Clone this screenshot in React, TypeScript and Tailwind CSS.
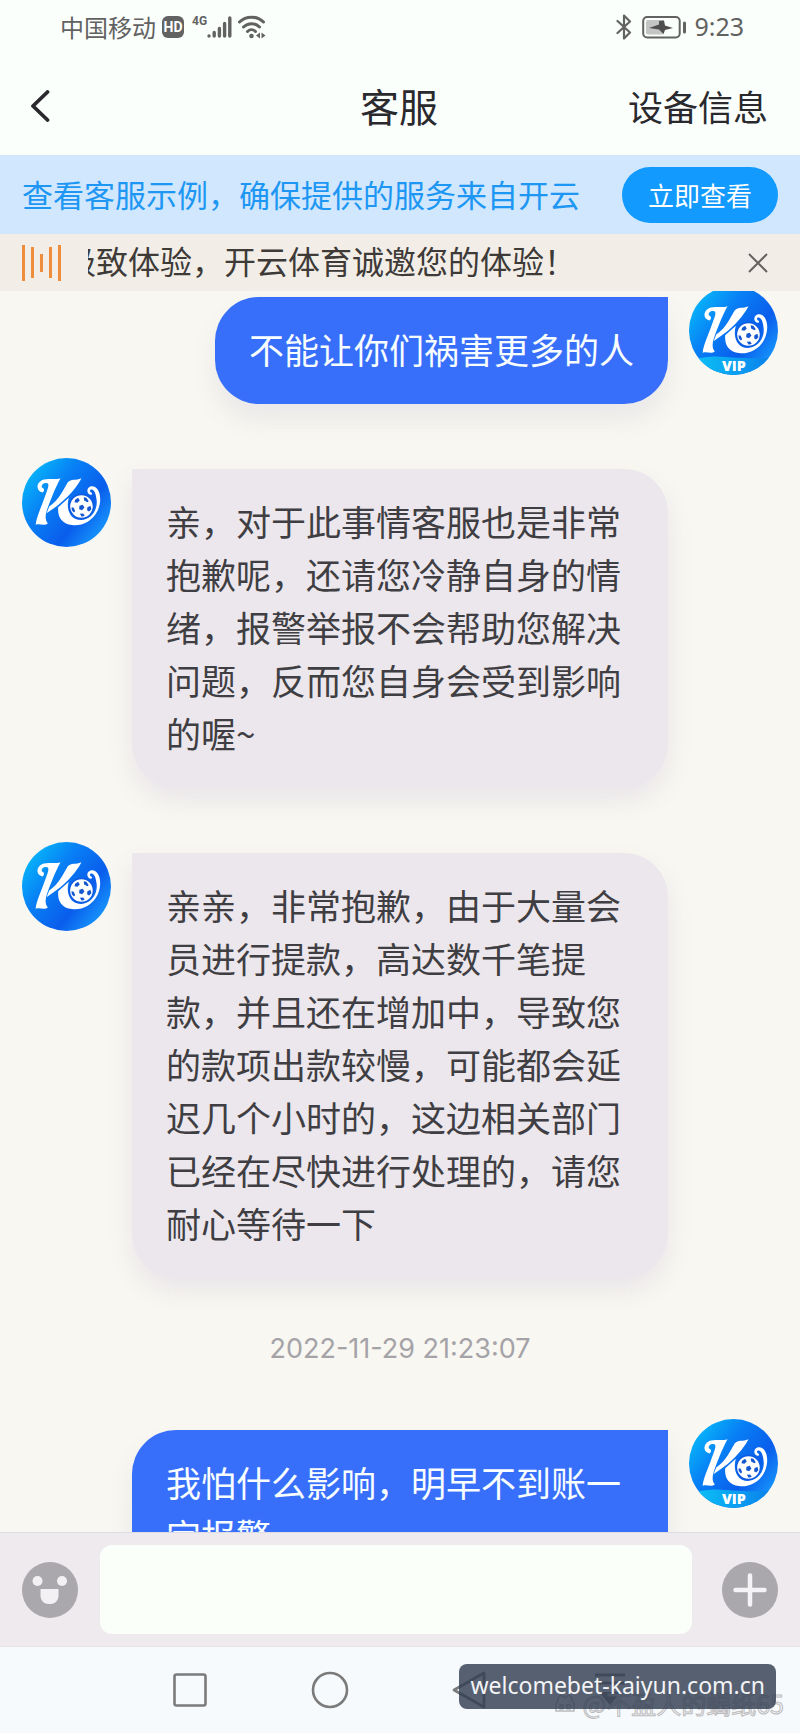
import { useId, useState } from "react";
import type { ReactNode } from "react";

type Message = {
  id: number;
  own?: boolean;
  time?: string;
  text: string;
};

const messages: Message[] = [
  { id: 1, own: true, text: "不能让你们祸害更多的人" },
  {
    id: 2,
    text: "亲，对于此事情客服也是非常抱歉呢，还请您冷静自身的情绪，报警举报不会帮助您解决问题，反而您自身会受到影响的喔~",
  },
  {
    id: 3,
    text: "亲亲，非常抱歉，由于大量会员进行提款，高达数千笔提款，并且还在增加中，导致您的款项出款较慢，可能都会延迟几个小时的，这边相关部门已经在尽快进行处理的，请您耐心等待一下",
  },
  {
    id: 4,
    own: true,
    time: "2022-11-29 21:23:07",
    text: "我怕什么影响，明早不到账一定报警",
  },
];

function Avatar({ vip }: { vip?: boolean }) {
  const id = useId();

  return (
    <svg viewBox="22 24 268 268" className="size-[89px] shrink-0" aria-hidden="true">
      <defs>
        <linearGradient id={`${id}bg`} x1="0" y1="0.1" x2="0.9" y2="0.8">
          <stop offset="0" stopColor="#06c3fb" />
          <stop offset="0.4" stopColor="#0880f5" />
          <stop offset="0.75" stopColor="#0a5dec" />
          <stop offset="1" stopColor="#1590fa" />
        </linearGradient>
        <linearGradient id={`${id}vip`} x1="0" y1="0" x2="1" y2="0">
          <stop offset="0" stopColor="#0cc6f7" />
          <stop offset="1" stopColor="#0a7bea" />
        </linearGradient>
        <clipPath id={`${id}clip`}>
          <circle cx="156" cy="158" r="134" />
        </clipPath>
      </defs>

      <g clipPath={`url(#${id}clip)`}>
        <rect x="22" y="24" width="268" height="268" fill={`url(#${id}bg)`} />
        {vip && (
          <path d="M22 250C90 228 120 238 170 240S260 246 290 230V292H22Z" fill={`url(#${id}vip)`} />
        )}
      </g>

      {/* K with the ball */}
      <g fill="#fff">
        <path d="M84 128C64 124 62 97 88 89C104 84 118 91 138 85C126 106 112 140 100 172C92 194 90 210 100 221C90 229 76 221 63 225C66 200 80 172 91 140C99 118 106 103 98 100C88 96 79 104 82 113C89 115 91 122 84 128Z" />
        <path d="M160 97C170 86 184 93 201 85C189 108 160 150 96 190L104 170C134 150 147 118 160 97Z" />
        <path d="M131 172L163 144C154 174 164 210 200 211C234 208 252 176 246 146C244 130 240 121 232 119C225 118 225 127 232 129C237 136 222 138 219 126C217 112 230 105 242 111C260 122 262 156 250 182C234 216 200 230 172 226C144 223 128 204 131 172Z" />
      </g>
      <circle cx="201" cy="170" r="38" fill="#0d5be0" />
      <circle cx="201" cy="170" r="34" fill="#fff" />
      <g fill="#1557cf">
        <path d="M182 150l9-6 5 8-7 7-9-2z" />
        <path d="M208 142l8 2 7 10-4 3-10-5z" />
        <path d="M195 168l10-3 5 8-7 8-9-3z" />
        <path d="M219 172l9-4 3 10-7 7-6-4z" />
        <path d="M171 172l7 2 4 10-4 4-6-7z" />
        <path d="M196 192l10-1 5 7-9 3z" />
      </g>

      {vip && (
        <text
          x="157"
          y="279"
          textAnchor="middle"
          fontSize="43"
          fontWeight="800"
          fill="#fff"
          className="font-['Open_Sans',sans-serif]"
        >
          VIP
        </text>
      )}
    </svg>
  );
}

function StatusBar() {
  return (
    <div className="flex h-14 items-center justify-between pr-14 pb-0.5 pl-[60px] text-2xl text-[#626262]">
      <div className="flex items-center">
        <span>中国移动</span>
        <span className="ml-1.5 flex size-[22px] items-center justify-center rounded-md bg-[#626262] font-['Roboto',sans-serif] text-sm font-bold text-white">
          HD
        </span>
        <span className="ml-2 self-start font-['Roboto',sans-serif] text-xs leading-5 font-bold">4G</span>
        <svg viewBox="0 0 25 24" className="h-6 w-[25px]" fill="none" stroke="currentColor" strokeWidth="3.4" strokeLinecap="round" aria-hidden="true">
          <path d="M2 21v.1M7.2 17.5V21M12.4 13.5V21M17.6 8.5V21M22.8 3V21" />
        </svg>
        <svg viewBox="0 0 28 24" className="ml-1.5 h-6 w-7" fill="none" stroke="currentColor" strokeWidth="3" strokeLinecap="round" aria-hidden="true">
          <path d="M1.5 7C8 .5 19 .5 25.5 7M5.500 12C10 7.5 17 7.5 21.500 12M9.500 16.500C12 14 15 14 17.500 16.500" />
          <circle cx="13.5" cy="21" r="2.3" fill="currentColor" stroke="none" />
          <path d="M22 17.5v6l-4-3zM23.500 17.500v6l4-3z" fill="currentColor" stroke="none" />
        </svg>
      </div>

      <div className="flex items-center">
        <svg viewBox="0 0 16 26" className="h-[26px] w-4" fill="none" stroke="currentColor" strokeWidth="2.2" strokeLinejoin="round" strokeLinecap="round" aria-hidden="true">
          <path d="M1.5 7l12.500 11.500-6 6V1.500l6 6L1.500 19" />
        </svg>
        <svg viewBox="0 0 44 24" className="ml-2.5 h-6 w-11" aria-hidden="true">
          <rect x="1.2" y="2" width="36.5" height="20.5" rx="4" fill="none" stroke="currentColor" strokeWidth="2" />
          <rect x="4" y="5" width="18" height="14.5" rx="2" fill="#c4c4c4" />
          <path d="M7 13L17 9.500V6L22 5.500 23 10.500 31 13 23 15 21.500 19 17 14.500Z" fill="#4f4f4f" />
          <path d="M42.500 8v9" stroke="currentColor" strokeWidth="3" strokeLinecap="round" />
        </svg>
        <span className="ml-2 font-['Noto_Sans',sans-serif] text-[25px]">9:23</span>
      </div>
    </div>
  );
}

function Bubble({ own, children }: { own?: boolean; children: ReactNode }) {
  return (
    <p
      className={`mt-[11px] px-[34px] pt-[25px] pb-[29px] text-[35px] leading-[53px] ${
        own
          ? "rounded-[44px] rounded-tr-none bg-[#376ffa] text-[#f8fdff] shadow-[0_16px_24px_rgba(120,110,170,0.1)]"
          : "rounded-[44px] rounded-tl-none bg-[#ece7ed] text-[#3f3e42] shadow-[0_12px_24px_rgba(130,110,180,0.12)]"
      }`}
    >
      {children}
    </p>
  );
}

export default function App() {
  const [draft, setDraft] = useState("");
  const [noticeOpen, setNoticeOpen] = useState(true);

  return (
    <div className="relative flex h-screen flex-col overflow-hidden bg-[#f8f7f1] font-['Noto_Sans_CJK_SC',sans-serif]">
      {/* Header */}
      <header className="bg-[#fbfffb]">
        <StatusBar />
        <div className="grid h-[99px] grid-cols-3 items-center pr-8 pl-[30px] text-[#29292e]">
          <button aria-label="返回" className="justify-self-start">
            <svg viewBox="0 0 20 32" className="h-8 w-5" fill="none" stroke="currentColor" strokeWidth="3.8" strokeLinecap="round" strokeLinejoin="round" aria-hidden="true">
              <path d="M17.500 2L3 16l14.500 14" />
            </svg>
          </button>
          <h1 className="justify-self-center text-[39px] leading-none">客服</h1>
          <button className="justify-self-end text-[35px] leading-none whitespace-nowrap">设备信息</button>
        </div>
      </header>

      {/* Verify banner */}
      <div className="flex h-[79px] shrink-0 items-center justify-between bg-[#d0e7fd] px-[22px]">
        <span className="text-[31px] whitespace-nowrap text-[#1d97f3]">查看客服示例，确保提供的服务来自开云</span>
        <button className="h-14 shrink-0 rounded-full bg-[#129aff] px-[26px] text-[26px] text-white">立即查看</button>
      </div>

      {/* Scrolling notice */}
      {noticeOpen && (
        <div className="flex h-[57px] shrink-0 items-center bg-[#f2eee7] pr-8 pl-[22px]">
          <svg viewBox="0 0 40 38" className="h-[38px] w-10 shrink-0" fill="none" stroke="#ee8d3b" strokeWidth="3" aria-hidden="true">
            <path d="M1.500 1v36M10.500 3v31M19.500 10v18M28.500 3v31M37.500 1v36" />
          </svg>
          <div className="ml-[26px] flex-1 overflow-hidden pb-1.5">
            <p className="-ml-6 text-[32px] leading-[48px] whitespace-nowrap text-[#3e3a38]">
              极致体验，开云体育诚邀您的体验！
            </p>
          </div>
          <button aria-label="关闭" className="text-[#66625f]" onClick={() => setNoticeOpen(false)}>
            <svg viewBox="0 0 20 20" className="size-5" fill="none" stroke="currentColor" strokeWidth="2" aria-hidden="true">
              <path d="M1 1l18 18M19 1L1 19" />
            </svg>
          </button>
        </div>
      )}

      {/* Messages */}
      <main className="min-h-0 flex-1 overflow-hidden">
        <div className="-mt-[5px] flex flex-col gap-[54px] px-[22px]">
          {messages.map((m) => (
            <div key={m.id} className="flex flex-col gap-[54px]">
              {m.time && (
                <time className="text-center font-['Inter',sans-serif] text-[27px] leading-[33px] text-[#a5a3a8]">
                  {m.time}
                </time>
              )}
              <div
                className={`flex items-start gap-[21px] ${
                  m.own ? "flex-row-reverse pl-[110px]" : "pr-[110px]"
                }`}
              >
                <Avatar vip={m.own} />
                <Bubble own={m.own}>{m.text}</Bubble>
              </div>
            </div>
          ))}
        </div>
      </main>

      {/* Input bar */}
      <form
        className="flex h-[114px] shrink-0 items-center gap-[22px] border-t border-[#dcdde4] bg-[#eeeaee] px-[22px]"
        onSubmit={(e) => e.preventDefault()}
      >
        <button type="button" aria-label="表情" className="shrink-0">
          <svg viewBox="0 0 56 56" className="size-14" aria-hidden="true">
            <circle cx="28" cy="28" r="28" fill="#aba8ad" />
            <circle cx="15.500" cy="19" r="5" fill="#f3f1f4" />
            <circle cx="40" cy="19" r="5" fill="#f3f1f4" />
            <path d="M18.500 27h18v7a8 8 0 0 1-8 8h-2a8 8 0 0 1-8-8z" fill="#f3f1f4" />
          </svg>
        </button>
        <input
          aria-label="消息"
          value={draft}
          onChange={(e) => setDraft(e.target.value)}
          className="h-[89px] min-w-0 flex-1 rounded-xl bg-[#fafffa] px-6 text-[32px] text-[#3f3e42] outline-none"
        />
        <button type="button" aria-label="更多" className="ml-2 shrink-0">
          <svg viewBox="0 0 56 56" className="size-14" aria-hidden="true">
            <circle cx="28" cy="28" r="28" fill="#aba8ad" />
            <path d="M28 13.500v29M13.500 28h29" stroke="#f5f3f6" strokeWidth="4.500" strokeLinecap="round" />
          </svg>
        </button>
      </form>

      {/* System navigation */}
      <nav className="relative grid h-[87px] shrink-0 grid-cols-4 items-center border-t border-[#e6e2e6] bg-[#f7fafc] px-[120px] text-[#7b7b7b]">
        <button aria-label="最近任务" className="justify-self-center">
          <svg viewBox="0 0 40 40" className="size-10" fill="none" stroke="currentColor" strokeWidth="2.600" aria-hidden="true">
            <rect x="4.500" y="4.500" width="31" height="31" rx="2" />
          </svg>
        </button>
        <button aria-label="主页" className="justify-self-center">
          <svg viewBox="0 0 40 40" className="size-10" fill="none" stroke="currentColor" strokeWidth="2.600" aria-hidden="true">
            <circle cx="20" cy="20" r="17" />
          </svg>
        </button>
        <button aria-label="后退" className="justify-self-center">
          <svg viewBox="0 0 40 40" className="size-10" fill="none" stroke="currentColor" strokeWidth="2.800" strokeLinejoin="round" aria-hidden="true">
            <path d="M34 3v34L4 20z" />
          </svg>
        </button>
        <button aria-label="下拉" className="justify-self-center">
          <svg viewBox="0 0 40 40" className="size-10" fill="none" stroke="currentColor" strokeWidth="3" aria-hidden="true">
            <path d="M5 5h30M5 13h30" />
            <path d="M9 22h22L20 35z" fill="currentColor" stroke="none" />
          </svg>
        </button>

        {/* Watermarks */}
        <span className="absolute right-4 bottom-3 flex items-center gap-2 text-[25px] leading-[36px] whitespace-nowrap text-[#f7f8fa] [-webkit-text-stroke:1px_#bcbcbe]">
          <svg viewBox="0 0 20 20" className="size-5" fill="none" stroke="#b9b9bb" strokeWidth="1.500" aria-hidden="true">
            <path d="M3 5l3-3 4 3 4-3 3 3v3l2 2v8H1v-8l2-2zM5 12h3v4H5zM12 12h3v4h-3z" />
          </svg>
          @不盈人的蝎纸65
        </span>
        <span className="absolute right-6 bottom-6 rounded-lg bg-[rgb(51,62,82)]/82 px-[11px] pb-[3px] font-['Noto_Sans',sans-serif] text-[23px] leading-[42px] text-[#f3f4f6]">
          welcomebet-kaiyun.com.cn
        </span>
      </nav>
    </div>
  );
}
